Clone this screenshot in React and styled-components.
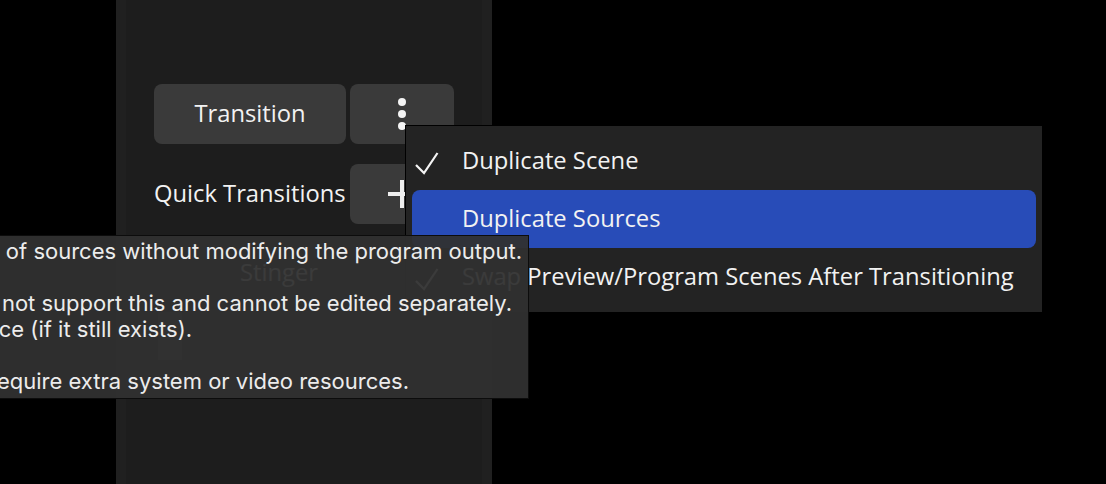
import React from "react";
import styled, { createGlobalStyle } from "styled-components";

const GlobalStyle = createGlobalStyle`
  html, body {
    margin: 0;
    background: #000;
    overflow: hidden;
  }
`;

const Page = styled.div`
  position: relative;
  width: 1106px;
  height: 484px;
  padding-left: 116px;
  box-sizing: border-box;
  overflow: hidden;
  font-family: "Open Sans", "Noto Sans", sans-serif;
  color: #f2f2f2;
`;

const Panel = styled.div`
  width: 376px;
  height: 484px;
  box-sizing: border-box;
  padding: 84px 28px 0;
  background: #1d1d1d;
  border-left: 10px solid #202020;
  border-right: 10px solid #202020;
  display: flex;
  flex-direction: column;
  gap: 20px;
`;

const Row = styled.div`
  display: grid;
  grid-template-columns: 192px 104px;
  gap: 4px;
  height: 60px;
  align-items: center;
`;

const Button = styled.div`
  height: 60px;
  border-radius: 8px;
  background: #3a3a3a;
  display: flex;
  align-items: center;
  justify-content: center;
  font-size: 23.75px;
`;

const ButtonText = styled.span`
  margin-top: -2px;
`;

const Label = styled.div`
  font-size: 23.75px;
  white-space: nowrap;
  margin-top: -2px;
`;

const SceneSelect = styled.div`
  height: 60px;
  display: flex;
  align-items: center;
  padding-left: 86px;
  font-size: 23.75px;
  margin-top: -2px;
`;

const CheckRow = styled.div`
  height: 48px;
  margin-top: -10px;
  display: flex;
  align-items: center;
  padding-left: 4px;
`;

const GhostBox = styled.div`
  width: 24px;
  height: 48px;
  background: #3a3a3a;
`;

const GhostField = styled.div`
  width: 272px;
  height: 16px;
  background: #212121;
  margin-top: 8px;
`;

const Menu = styled.div`
  position: absolute;
  left: 405px;
  top: 125px;
  width: 637px;
  height: 187px;
  box-sizing: border-box;
  padding: 6px 6px 0;
  background: #232323;
  border-top: 1px solid #000;
  border-left: 1px solid #000;
  z-index: 2;
`;

const MenuItem = styled.div`
  position: relative;
  height: 58px;
  border-radius: 8px;
  padding: 0 0 2px 50px;
  box-sizing: border-box;
  display: flex;
  align-items: center;
  font-size: 23.75px;
  white-space: nowrap;
  background: ${(p) => (p.$active ? "#284cb8" : "transparent")};
`;

const CheckMark = styled.svg`
  position: absolute;
  left: 3px;
  top: 20px;
  width: 24px;
  height: 24px;
`;

const Tooltip = styled.div`
  position: absolute;
  left: -1px;
  top: 235px;
  width: 530px;
  height: 164px;
  box-sizing: border-box;
  padding: 2px 0;
  background: rgba(48, 48, 48, 0.95);
  border: 1px solid #0c0c0c;
  z-index: 3;
  font-family: Inter, "Liberation Sans", sans-serif;
  font-size: 22px;
  line-height: 26px;
  color: #ececec;
`;

const TipLine = styled.div`
  height: 26px;
  display: flex;
  justify-content: flex-end;
  white-space: nowrap;
  padding-right: ${(p) => p.$right}px;
`;

function Dots() {
  return (
    <svg width="12" height="36" viewBox="0 0 12 36" fill="#f4f4f4">
      <circle cx="6" cy="6" r="4" />
      <circle cx="6" cy="18" r="4" />
      <circle cx="6" cy="30" r="4" />
    </svg>
  );
}

function Plus() {
  return (
    <svg width="28" height="28" viewBox="0 0 28 28" fill="#eeeeee">
      <rect x="0" y="12" width="28" height="4" />
      <rect x="12" y="0" width="4" height="28" />
    </svg>
  );
}

function Check() {
  return (
    <CheckMark viewBox="0 0 24 24" fill="none" stroke="#f4f4f4" strokeWidth="2.2">
      <path d="M1 13 L9 21 L22.5 1" />
    </CheckMark>
  );
}

export default function App() {
  return (
    <>
      <GlobalStyle />
      <Page>
        <Panel>
          <Row>
            <Button>
              <ButtonText>Transition</ButtonText>
            </Button>
            <Button>
              <Dots />
            </Button>
          </Row>
          <Row>
            <Label>Quick Transitions</Label>
            <Button>
              <Plus />
            </Button>
          </Row>
          <SceneSelect>Stinger</SceneSelect>
          <CheckRow>
            <GhostBox />
            <GhostField />
          </CheckRow>
        </Panel>

        <Menu>
          <MenuItem>
            <Check />
            Duplicate Scene
          </MenuItem>
          <MenuItem $active>Duplicate Sources</MenuItem>
          <MenuItem>
            <Check />
            Swap Preview/Program Scenes After Transitioning
          </MenuItem>
        </Menu>

        <Tooltip>
          <TipLine $right={6}>of sources without modifying the program output.</TipLine>
          <TipLine $right={6} />
          <TipLine $right={16}>do not support this and cannot be edited separately.</TipLine>
          <TipLine $right={336}>source (if it still exists).</TipLine>
          <TipLine $right={6} />
          <TipLine $right={119}>require extra system or video resources.</TipLine>
        </Tooltip>
      </Page>
    </>
  );
}
